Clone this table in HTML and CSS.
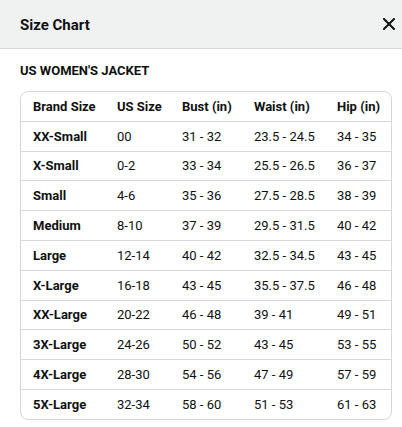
FILE: index.html
```html
<!DOCTYPE html>
<html lang="en">
<head>
    <meta charset="UTF-8">
    <meta name="viewport" content="width=device-width, initial-scale=1.0">
    <title>Size Chart</title>
    <link rel="stylesheet" href="styles.css">
</head>
<body>
    <div class="modal">
        <!-- Header -->
        <div class="modal-header">
            <h1>Size Chart</h1>
            <button class="close" aria-label="Close">
                <svg width="12" height="12" viewBox="0 0 12 12">
                    <path d="M1 1 L11 11 M11 1 L1 11" stroke="#0f1111" stroke-width="2" stroke-linecap="square"/>
                </svg>
            </button>
        </div>

        <!-- Isi -->
        <div class="modal-body">
            <h2>US WOMEN'S JACKET</h2>
            <div class="table-wrap">
                <table class="size-table">
                    <colgroup>
                        <col class="c1"><col class="c2"><col class="c3"><col class="c4"><col class="c5">
                    </colgroup>
                    <thead>
                        <tr>
                            <th>Brand Size</th>
                            <th>US Size</th>
                            <th>Bust (in)</th>
                            <th>Waist (in)</th>
                            <th>Hip (in)</th>
                        </tr>
                    </thead>
                    <tbody id="size-rows"></tbody>
                </table>
            </div>
        </div>
    </div>

    <script>
        // Data ukuran
        const ukuran = [
            ["XX-Small", "00", "31 - 32", "23.5 - 24.5", "34 - 35"],
            ["X-Small", "0-2", "33 - 34", "25.5 - 26.5", "36 - 37"],
            ["Small", "4-6", "35 - 36", "27.5 - 28.5", "38 - 39"],
            ["Medium", "8-10", "37 - 39", "29.5 - 31.5", "40 - 42"],
            ["Large", "12-14", "40 - 42", "32.5 - 34.5", "43 - 45"],
            ["X-Large", "16-18", "43 - 45", "35.5 - 37.5", "46 - 48"],
            ["XX-Large", "20-22", "46 - 48", "39 - 41", "49 - 51"],
            ["3X-Large", "24-26", "50 - 52", "43 - 45", "53 - 55"],
            ["4X-Large", "28-30", "54 - 56", "47 - 49", "57 - 59"],
            ["5X-Large", "32-34", "58 - 60", "51 - 53", "61 - 63"]
        ];

        const tbody = document.getElementById('size-rows');
        ukuran.forEach(baris => {
            const tr = document.createElement('tr');
            tr.innerHTML = `
                <th>${baris[0]}</th>
                <td>${baris[1]}</td>
                <td>${baris[2]}</td>
                <td>${baris[3]}</td>
                <td>${baris[4]}</td>
            `;
            tbody.appendChild(tr);
        });
    </script>
</body>
</html>
```

FILE: styles.css
```css
body {
    margin: 0;
    font-family: Roboto, "Liberation Sans", Arial, sans-serif;
    color: #0f1111;
    background: #ffffff;
}
.modal-header {
    height: 48px;
    background-color: #f0f2f2;
    border-bottom: 1px solid #d5d9d9;
    display: flex;
    align-items: center;
    justify-content: space-between;
    padding: 0 7px 0 20px;
}
.modal-header h1 {
    margin: 0;
    font-size: 15px;
    font-weight: 700;
    padding-top: 1px;
}
.close {
    background: none;
    border: none;
    padding: 0;
    width: 12px;
    height: 12px;
    margin-top: 0;
    cursor: pointer;
    display: flex;
}
.modal-body {
    padding: 14px 10px 0 20px;
}
.modal-body h2 {
    margin: 0 0 12px;
    font-size: 13px;
    font-weight: 700;
    line-height: 16px;
}
.table-wrap {
    border: 1px solid #d5d9d9;
    border-radius: 8px;
    overflow: hidden;
    width: 370px;
}
.size-table {
    width: 100%;
    border-collapse: collapse;
    table-layout: fixed;
    font-size: 13px;
}
.c1 { width: 84px; }
.c2 { width: 65px; }
.c3 { width: 72px; }
.c4 { width: 83px; }
.c5 { width: 66px; }
.size-table th,
.size-table td {
    height: 28.8px;
    padding: 0 0 0 12px;
    text-align: left;
    white-space: nowrap;
    border-bottom: 1px solid #d5d9d9;
}
.size-table th {
    font-weight: 700;
}
.size-table td {
    font-weight: 400;
}
.size-table tbody tr:last-child th,
.size-table tbody tr:last-child td {
    border-bottom: none;
}
```
